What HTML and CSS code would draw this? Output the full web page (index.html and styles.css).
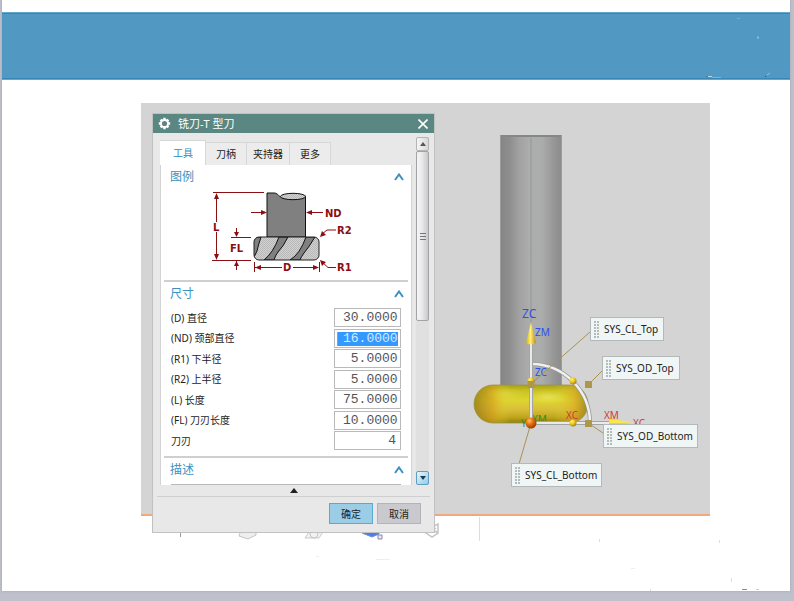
FILE: index.html
```html
<!DOCTYPE html>
<html lang="zh-CN">
<head>
<meta charset="utf-8">
<title>铣刀-T 型刀</title>
<link rel="stylesheet" href="styles.css">
</head>
<body>
<main class="slide">
  <header class="banner">
    <svg class="banner-marks" width="90" height="66" viewBox="700 13 90 66" aria-hidden="true">
      <path d="M706 76.500h3" stroke="#4d7c96"/><path d="M708 76.500h4" stroke="#b9d8e6"/><path d="M712 77.500h9" stroke="#7bb3d2"/>
      <path d="M757 37.500h2" stroke="#8cbfd9" stroke-width="2"/><path d="M737 18.500h3" stroke="#74aecf"/>
      <path d="M765 76.500h1" stroke="#245a78"/><path d="M767 75l3 -2" stroke="#8fc0da"/>
    </svg>
  </header>

  <section class="stage">
    <svg class="scene" width="569" height="411" viewBox="141 103 569 411" aria-hidden="true">
      <defs>
        <linearGradient id="shank" x1="0" x2="1" y1="0" y2="0">
          <stop offset="0" stop-color="#868686"/><stop offset=".15" stop-color="#8e8e8e"/>
          <stop offset=".3" stop-color="#a1a1a1"/><stop offset=".48" stop-color="#adadad"/>
          <stop offset=".68" stop-color="#abacac"/><stop offset=".85" stop-color="#999"/><stop offset="1" stop-color="#8b8b8b"/>
        </linearGradient>
        <linearGradient id="disc" x1="0" x2="0" y1="0" y2="1">
          <stop offset="0" stop-color="#a99f18"/><stop offset=".15" stop-color="#c9c222"/>
          <stop offset=".4" stop-color="#dcd52e"/><stop offset=".65" stop-color="#d8bd3a"/>
          <stop offset=".85" stop-color="#c0a51b"/><stop offset="1" stop-color="#8e7e13"/>
        </linearGradient>
        <linearGradient id="discEnds" x1="0" x2="1" y1="0" y2="0">
          <stop offset="0" stop-color="#8d7613" stop-opacity=".75"/><stop offset=".17" stop-color="#d69d1c" stop-opacity=".6"/>
          <stop offset=".32" stop-color="#e4de2c" stop-opacity="0"/><stop offset=".7" stop-color="#dfd930" stop-opacity="0"/>
          <stop offset=".88" stop-color="#dba024" stop-opacity=".55"/><stop offset="1" stop-color="#8f7c12" stop-opacity=".8"/>
        </linearGradient>
        <radialGradient id="glow"><stop offset="0" stop-color="#f4ef8a" stop-opacity=".75"/><stop offset="1" stop-color="#f0e850" stop-opacity="0"/></radialGradient>
        <linearGradient id="cone" x1="0" x2="1" y1="0" y2="0">
          <stop offset="0" stop-color="#d6ad16"/><stop offset=".45" stop-color="#ffef73"/><stop offset="1" stop-color="#b88b12"/>
        </linearGradient>
        <linearGradient id="coneRight" x1="0" x2="0" y1="0" y2="1">
          <stop offset="0" stop-color="#f3c91f"/><stop offset=".45" stop-color="#ffed55"/><stop offset="1" stop-color="#b88b12"/>
        </linearGradient>
        <radialGradient id="knob" cx=".35" cy=".3" r=".7"><stop offset="0" stop-color="#fff27d"/><stop offset=".5" stop-color="#ecc922"/><stop offset="1" stop-color="#a78713"/></radialGradient>
        <radialGradient id="origin" cx=".35" cy=".3" r=".7"><stop offset="0" stop-color="#ffc078"/><stop offset=".45" stop-color="#ec7410"/><stop offset="1" stop-color="#9a3c00"/></radialGradient>
      </defs>
      <rect x="500.500" y="135.500" width="61" height="250" fill="url(#shank)" stroke="#9b9c9b"/>
      <path d="M501 136h60" stroke="#858785" stroke-width="2"/>
      <path d="M531 138v197" stroke="#a0a1a1" stroke-width="2"/>
      <rect x="474" y="385" width="114" height="38" rx="19" fill="url(#disc)"/>
      <rect x="474" y="385" width="114" height="38" rx="19" fill="url(#discEnds)" stroke="#9b9548" stroke-width=".8"/>
      <ellipse cx="548" cy="397" rx="22" ry="7" fill="url(#glow)" opacity=".7"/>
      <ellipse cx="505" cy="394" rx="20" ry="7" fill="url(#glow)" opacity=".35"/>
      <g class="axis-green"><text x="521" y="427">Y</text><text x="532" y="423">XM</text></g>
      <path d="M532 364A59 59 0 0 1 590 423" fill="none" stroke="#969696" stroke-width="4"/>
      <path d="M532 364A59 59 0 0 1 590 423" fill="none" stroke="#f0f0f0" stroke-width="2.500"/>
      <path d="M531 343V423H610" fill="none" stroke="#8d8d8d" stroke-width="4"/>
      <path d="M531 343V423H610" fill="none" stroke="#eaeaea" stroke-width="2.500"/>
      <path d="M531 322L526 343Q531 346 536 343Z" fill="url(#cone)"/>
      <path d="M632 423L610 418Q608 423 610 427Z" fill="url(#coneRight)"/>
      <g class="axis-blue"><text class="axis-large" x="522" y="318">ZC</text><text x="535" y="336">ZM</text><text x="535" y="376">ZC</text></g>
      <g class="axis-red"><text x="566" y="419">XC</text><text x="604" y="419">XM</text><text x="633" y="427">XC</text></g>
      <g fill="none" stroke="#a99255"><path d="M531 384L590 332"/><path d="M588 385L602 371"/><path d="M588 423L603 433"/><path d="M531 423L519 464"/></g>
      <circle cx="531" cy="381" r="3.500" fill="url(#knob)"/><circle cx="573" cy="381" r="3.500" fill="url(#knob)"/><circle cx="573" cy="423" r="3.500" fill="url(#knob)"/>
      <path d="M527.500 381h7v7h-7zM585 381h7v7h-7zM585 420h7v7h-7z" fill="#ad984a"/>
      <circle cx="531" cy="423" r="5.500" fill="url(#origin)"/>
    </svg>
    <div class="callout cl-top">SYS_CL_Top</div>
    <div class="callout od-top">SYS_OD_Top</div>
    <div class="callout od-bottom">SYS_OD_Bottom</div>
    <div class="callout cl-bottom">SYS_CL_Bottom</div>

    <form class="dialog">
      <div class="titlebar">
        <svg width="13" height="13" viewBox="0 0 13 13" aria-hidden="true">
          <g stroke="#fff" stroke-width="2.400"><path d="M6.500 .8v11.400M.8 6.500h11.400M2.600 2.600l7.800 7.800M10.400 2.600l-7.800 7.800"/></g>
          <circle cx="6.500" cy="6.500" r="4.500" fill="#fff"/><circle cx="6.500" cy="6.500" r="2.600" fill="#5b8782"/>
        </svg>
        <h1>铣刀-T 型刀</h1>
        <button type="button" class="close" aria-label="关闭"><svg width="10" height="10" viewBox="0 0 10 10"><path d="M.5 .5l9 9M9.500 .5L.5 9.500" stroke="#fff" stroke-width="1.600"/></svg></button>
      </div>

      <div class="body">
        <div class="content">
          <nav class="tabs">
            <button type="button" class="tab active">工具</button><button type="button" class="tab">刀柄</button><button type="button" class="tab">夹持器</button><button type="button" class="tab">更多</button>
          </nav>
          <div class="panel">
            <section class="group">
              <button type="button" class="group-head">图例<svg width="10" height="8" viewBox="0 0 10 8"><path d="M1 7L5 1.500L9 7"/></svg></button>
              <svg class="legend" width="160" height="91" viewBox="200 189 160 91" aria-hidden="true">
                <defs>
                  <pattern id="dots" width="2" height="2" patternUnits="userSpaceOnUse"><path d="M0 0h2v2h-2z" fill="#d2d2d2"/><path d="M0 0h1v1h-1zM1 1h1v1h-1z" fill="#b7b7b7"/></pattern>
                  <clipPath id="cutter"><rect x="254" y="237" width="65" height="23" rx="5"/></clipPath>
                </defs>
                <path d="M267 237V193H274C279 193 278 198 285 198C293 200 300 200 305.500 196V237Z" fill="#808080" stroke="#111"/>
                <ellipse cx="293" cy="196.500" rx="12.500" ry="3.200" fill="url(#dots)" stroke="#111"/>
                <g clip-path="url(#cutter)">
                  <path d="M254 237h65v23h-65z" fill="url(#dots)"/>
                  <g fill="#808080" stroke="#111"><path d="M250 237H261Q258 246 257 251Q255 257 252 258Z"/><path d="M279 237H288Q283 247 278 252Q275 256 274 260H264Q273 253 279 237Z"/><path d="M306 237H315Q309 247 304 253Q301 257 300 260H290Q300 254 306 237Z"/></g>
                </g>
                <rect x="254" y="237" width="65" height="23" rx="5" fill="none" stroke="#222"/>
                <g stroke="#8a0f12" fill="none"><path d="M213 192.500h51M216.500 194v28M216.500 232v27M212 260.500h39M231 237.500h20M236.500 228v8M236.500 261v9M251 212.500h15M307 212.500h16M254.500 262v10M319.500 262v10M255 267.500h27M293 267.500h25M321 235L327 230H336M321 261L328 267.500H336"/></g>
                <path d="M216.500 193l-2.500 6h5zM216.500 260l-2.500 -6h5zM236.500 237l-2.500 -5h5zM236.500 261l-2.500 5h5zM267 212.500l-6 -2.500v5zM306 212.500l6 -2.500v5zM255 267.500l6 -2.500v5zM319 267.500l-6 -2.500v5zM320 237l2 -6l4 4zM320 260l2 6l4 -4z" fill="#8a0f12"/>
                <g class="legend-text"><text x="213" y="231">L</text><text x="230" y="252">FL</text><text x="283" y="271">D</text><text x="325" y="217">ND</text><text x="337" y="234">R2</text><text x="337" y="271">R1</text></g>
              </svg>
            </section>
            <section class="group">
              <button type="button" class="group-head">尺寸<svg width="10" height="8" viewBox="0 0 10 8"><path d="M1 7L5 1.500L9 7"/></svg></button>
              <div class="fields">
                <div class="field"><label for="d">(D) 直径</label><input id="d" type="text" value="30.00000"></div>
                <div class="field"><label for="nd">(ND) 颈部直径</label><input id="nd" class="selected" type="text" value="16.00000"></div>
                <div class="field"><label for="r1">(R1) 下半径</label><input id="r1" type="text" value=" 5.00000"></div>
                <div class="field"><label for="r2">(R2) 上半径</label><input id="r2" type="text" value=" 5.00000"></div>
                <div class="field"><label for="l">(L) 长度</label><input id="l" type="text" value="75.00000"></div>
                <div class="field"><label for="fl">(FL) 刀刃长度</label><input id="fl" type="text" value="10.00000"></div>
                <div class="field"><label for="n">刀刃</label><input id="n" class="count" type="text" value="4"></div>
              </div>
            </section>
            <section class="group">
              <button type="button" class="group-head">描述<svg width="10" height="8" viewBox="0 0 10 8"><path d="M1 7L5 1.500L9 7"/></svg></button>
              <div class="field-edge"></div>
            </section>
          </div>
        </div>
        <div class="scrollbar">
          <button type="button" class="step" aria-label="向上"><svg width="6" height="4" viewBox="0 0 6 4"><path d="M0 4L3 0L6 4Z" fill="#555"/></svg></button>
          <div class="thumb"><i></i><i></i><i></i></div>
          <button type="button" class="step hot" aria-label="向下"><svg width="6" height="4" viewBox="0 0 6 4"><path d="M0 0L3 4L6 0Z" fill="#1b3d52"/></svg></button>
        </div>
      </div>

      <div class="fold"><svg width="8" height="5" viewBox="0 0 8 5" aria-hidden="true"><path d="M0 5L4 0L8 5Z" fill="#222"/></svg></div>
      <div class="actions"><button type="button" class="primary">确定</button><button type="button">取消</button></div>
    </form>
  </section>

  <svg class="remnants" width="649" height="75" viewBox="141 516 649 75" aria-hidden="true">
    <path d="M180.500 532v5" stroke="#999"/><path d="M479.500 517v24" stroke="#ddd"/>
    <path d="M240 533L239 536L248 539L256 535V532" fill="#eee" stroke="#c4c4c4"/>
    <path d="M309 532L305 538H319L323 532" fill="#f2f2f2" stroke="#ccc"/><circle cx="314" cy="534" r="4" fill="none" stroke="#c4c4c4"/>
    <path d="M362 533L372 537L379 534V531" fill="#4f7ce8" stroke="#6f8fdc"/><path d="M378 535h4v4h-4z" fill="#e7e7f5" stroke="#88a"/>
    <path d="M423 531L432 537L438 533V524L430 528M430 528L438 533M430 532l6 -4" fill="none" stroke="#c4c4c4" stroke-width="1.500"/>
    <path d="M719.500 540v3M731.500 578v4M599.500 539v3M650.500 589v2" stroke="#ddd"/>
    <path d="M316 556.500h3M376 559.500h14M631 568.500h4" stroke="#eee"/>
    <path d="M742 589.500h5" stroke="#a08088"/><path d="M756 589.500h3" stroke="#dcc5cc"/>
  </svg>
</main>
</body>
</html>
```

FILE: styles.css
```css
* { box-sizing: border-box; }

body {
  margin: 0;
  background: #bec1cb;
  font: 10px/16px "Noto Sans", "Noto Sans CJK SC", sans-serif;
  color: #222;
}

button, input { margin: 0; padding: 0; font: inherit; color: inherit; }
button { border: 0; background: none; }
svg { display: block; flex: none; }

.slide {
  min-height: calc(100vh - 10px);
  margin: 0 4px 10px 2px;
  padding-top: 12px;
  background: #fff;
  box-shadow: 0 0 3px #a4a5b5;
}

.banner {
  display: flex;
  justify-content: flex-end;
  height: 68px;
  background: #5199c3;
  border: solid #65a6cc;
  border-width: 1px 0;
  box-shadow: inset 0 1px #3788b9, inset 0 -1px #3788b9;
}

.stage {
  position: relative;
  margin: 23px 80px 0 139px;
  background: #d4d4d4;
  border-bottom: 2px solid #efaa7c;
}

.scene text { font-family: "Noto Sans", sans-serif; font-size: 10px; }
.scene .axis-large { font-size: 12px; }
.axis-blue { fill: #2b50f0; }
.axis-red { fill: #cf3a3a; }
.axis-green { fill: #2c8f28; }

.callout {
  position: absolute;
  height: 24px;
  padding: 3px 2px 3px 13px;
  border: 1px solid #b3b9b9;
  background: #f0f6f6;
  white-space: nowrap;
}
.callout::before {
  content: "";
  position: absolute;
  left: 3px;
  top: 2px;
  width: 5px;
  height: 18px;
  background: repeating-linear-gradient(#f0f6f6 0 1px, transparent 1px 3px), linear-gradient(90deg, #b4bbbb 2px, #f0f6f6 2px 3px, #b4bbbb 3px);
}
.cl-top { left: 449px; top: 214px; width: 74px; }
.od-top { left: 461px; top: 253px; width: 78px; }
.od-bottom { left: 462px; top: 321px; width: 95px; }
.cl-bottom { left: 370px; top: 360px; width: 91px; }

.dialog {
  position: absolute;
  left: 11px;
  top: 10px;
  width: 283px;
  border: 1px solid #c0c2c1;
  background: #e8e8e8;
}

.titlebar {
  display: flex;
  align-items: center;
  gap: 7px;
  height: 19px;
  padding: 0 6px 0 5px;
  background: #5b8782;
  color: #fff;
}
.titlebar h1 { flex: 1; margin: 0; font-size: 11px; font-weight: 400; }

.body { display: flex; gap: 4px; padding: 4px 5px 0 7px; }
.content { flex: 1; padding-top: 3px; }

.tabs { display: flex; align-items: flex-end; }
.tab {
  height: 23px;
  padding: 0 10px;
  border: 1px solid #d7d7d7;
  border-width: 1px 1px 0 0;
  background: #ececec;
}
.tab:nth-child(3) { padding: 0 6px; }
.tab.active { height: 25px; padding: 0 12px 0 13px; background: #fff; color: #2b8abb; }

.panel { border: solid #d3d3d3; border-width: 0 1px; background: #fff; }
.group { margin: 0 3px; }
.group + .group { border-top: 2px solid #cfcfcf; }
.group-head {
  display: flex;
  align-items: center;
  justify-content: space-between;
  width: 100%;
  height: 24px;
  padding: 0 4px 0 6px;
  font-size: 12px;
  color: #3a92c1;
}
.group-head path { fill: none; stroke: #3a92c1; stroke-width: 2; }
.legend { margin-left: 36px; }
.legend-text { font: bold 10px "DejaVu Sans", sans-serif; fill: #8a0f12; }

.fields {
  display: flex;
  flex-direction: column;
  justify-content: space-between;
  height: 142px;
  margin: 2px 7px 6px;
}
.field { display: flex; align-items: center; justify-content: space-between; height: 19px; }
.field input {
  width: 67px;
  height: 19px;
  padding: 0 2px 0 8px;
  border: 1px solid #b9b9b9;
  border-radius: 0;
  background: #fff;
  font: 13px/17px "Liberation Mono", monospace;
  color: #555;
}
.field .selected {
  background: linear-gradient(90deg, #e48a3c 1px, #3399ff 1px) 2px 2px / 61px 14px no-repeat #fff;
  color: #d4eaff;
}
.field .count { padding-right: 4px; text-align: right; }
.field-edge { height: 3px; margin: 0 7px; border-bottom: 1px solid #b9b9b9; }

.scrollbar { display: flex; flex-direction: column; width: 13px; background: #e0e0e0; }
.step {
  display: grid;
  place-items: center;
  height: 14px;
  border: 1px solid #b4b4b4;
  border-radius: 2px;
  background: linear-gradient(90deg, #f6f6f6, #d8d8d8);
}
.step.hot { margin-top: auto; border-color: #5b9fc2; background: linear-gradient(135deg, #e7f6fd, #95cbe7); }
.thumb {
  display: flex;
  flex-direction: column;
  align-items: center;
  justify-content: center;
  gap: 2px;
  height: 170px;
  border: 1px solid #a3a3a3;
  border-radius: 2px;
  background: linear-gradient(90deg, #f5f5f5, #e9e9eb 45%, #c8c8cb);
}
.thumb i { width: 6px; height: 1px; background: #777; }

.fold {
  display: flex;
  align-items: center;
  justify-content: center;
  height: 12px;
  margin: 0 4px;
  border-bottom: 1px solid #cfcfcf;
}
.actions { display: flex; justify-content: flex-end; gap: 4px; padding: 6px 13px 8px; }
.actions button { width: 44px; height: 21px; border: 1px solid #b4b4b6; background: #cacace; }
.actions .primary { border-color: #5ba9d0; background: #9bcde6; }

.remnants { margin-left: 139px; }
```
